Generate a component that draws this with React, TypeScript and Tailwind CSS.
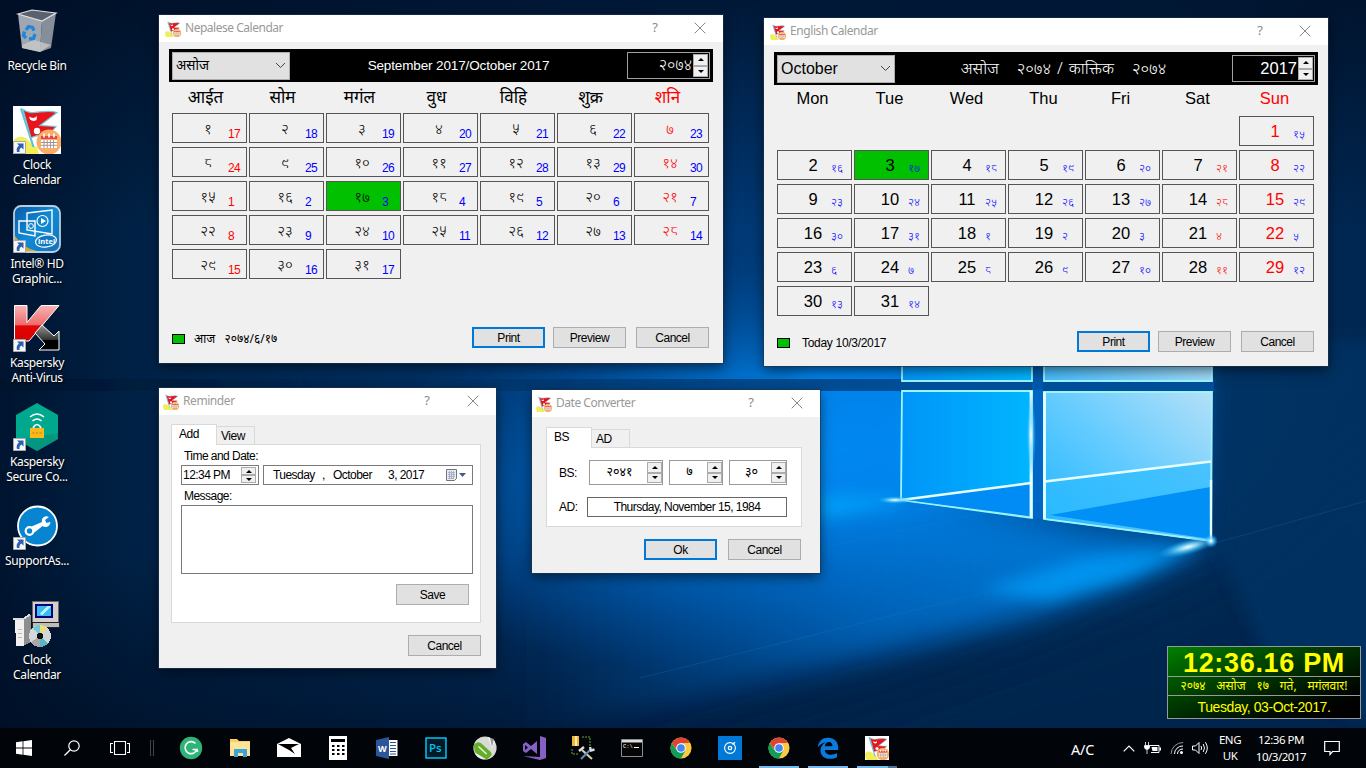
import type { ReactNode } from 'react';

const NP = ['०', '१', '२', '३', '४', '५', '६', '७', '८', '९'];
const np = (n: number) => String(n).split('').map((d) => NP[Number(d)]).join('');

/* ---------- icons ---------- */

function FlagIcon({ size }: { size: number }) {
  return (
    <svg width={size} height={size} viewBox="0 0 48 48" className="block shrink-0">
      <path d="M0 35c4-6 12-5 15-1 4 5 6 6 9 7l2 7H3c-2-5-3-9-3-13z" fill="#f2ee5a" />
      <path d="M8 2.500L20.500 41" stroke="#5fc0d8" strokeWidth="2.200" />
      <path d="M10 3.500C20 11 30 2 44 6.500L27 19.500 43 20.500C37 30 24 28 18 32z" fill="#e8141c" stroke="#6cc6da" strokeWidth="1.200" />
      <path d="M16 10.500q4.500 3 8-.5l-.5 4q-3.500 2-6.500-.5z" fill="#fff" />
      <circle cx="24" cy="25" r="3.200" fill="#fff" />
      <circle cx="36" cy="36" r="12.500" fill="#f9ad67" />
      <path d="M28 30h16v3H28z" fill="#e2454d" />
      <path d="M31 27.500v4M36 27.500v4M41 27.500v4" stroke="#fff" strokeWidth="1.600" />
      <path d="M28 34h16v8H28z" fill="#fff" />
      <path d="M28 36.500h16M28 39.300h16M31 34v8M34.200 34v8M37.400 34v8M40.600 34v8" stroke="#9b8a86" strokeWidth=".9" />
    </svg>
  );
}

function Shortcut() {
  return (
    <svg width="13" height="13" viewBox="0 0 13 13" className="absolute bottom-0 left-0">
      <path d="M.5.5h12v12H.5z" fill="#f7f7f7" stroke="#a8a8a8" />
      <path d="M4 2.500h6.500v6L8.300 6.600C6.500 8 6.200 9.400 6.600 11L4 11C3 8.500 4 6 6 4.600z" fill="#2c5fae" />
    </svg>
  );
}

function RecycleIcon() {
  return (
    <svg width="48" height="48" viewBox="0 0 48 48">
      <path d="M29 14l14-8-5 35-11 4z" fill="#868e99" />
      <path d="M5 7l24 7-2 31-18-4z" fill="#a0a7b0" />
      <path d="M9 38l12-5 17 5-11 7-18-4z" fill="#c9c9c9" opacity=".8" />
      <path d="M5 7l14-4 24 3-14 8z" fill="#59616c" stroke="#dfe3e7" strokeWidth="1.200" />
      <path d="M13 23l2.500-3.500 4 1 1.500 3M22 27l-1.500 4.500-4.500.5M13 31l-2.500-2.500 1-4" fill="none" stroke="#1f86dc" strokeWidth="3.300" />
    </svg>
  );
}

function IntelIcon() {
  return (
    <svg width="48" height="48" viewBox="0 0 48 48">
      <defs>
        <linearGradient id="intel" x1="0" y1="0" x2="1" y2="1">
          <stop offset="0" stopColor="#0a5aa8" />
          <stop offset=".5" stopColor="#0f8bd6" />
          <stop offset="1" stopColor="#1470b8" />
        </linearGradient>
      </defs>
      <rect x="1" y="1" width="46" height="46" rx="7" fill="url(#intel)" stroke="#b9cddd" strokeWidth="1.800" />
      <path d="M2 31q8 12 22 15H7q-5-1-5-6z" fill="#d9a62c" />
      <path d="M14 8l25-3v24l-25-4zM6 16h16v15L6 28z" fill="none" stroke="#fff" strokeWidth="1.400" />
      <circle cx="29.500" cy="16" r="5.500" fill="none" stroke="#fff" strokeWidth="1.200" />
      <path d="M28 13l5 3-5 3z" fill="#fff" />
      <circle cx="18" cy="21" r="2.400" fill="none" stroke="#fff" />
      <ellipse cx="33" cy="36" rx="10.500" ry="6" fill="#1277c0" stroke="#fff" strokeWidth="1.200" transform="rotate(-8 33 36)" />
      <text x="25" y="38.500" fontSize="7.500" fontWeight="700" fill="#fff" fontFamily="Open Sans">intel</text>
    </svg>
  );
}

function KasperskyIcon() {
  return (
    <svg width="48" height="48" viewBox="0 0 48 48">
      <defs>
        <linearGradient id="kred" x1="0" y1="0" x2="0" y2="1">
          <stop offset="0" stopColor="#f8b5b5" />
          <stop offset=".55" stopColor="#ec6a6c" />
          <stop offset=".57" stopColor="#e20606" />
          <stop offset="1" stopColor="#d80000" />
        </linearGradient>
        <linearGradient id="kblk" x1="0" y1="0" x2="0" y2="1">
          <stop offset="0" stopColor="#999" />
          <stop offset=".58" stopColor="#333" />
          <stop offset=".62" stopColor="#000" />
        </linearGradient>
      </defs>
      <path d="M1.500 1.500h12.500v17l14-17h18L16 37H1.500z" fill="url(#kred)" stroke="#fff" />
      <path d="M22 29l7-8 12 11 5-5v19H26l6-6z" fill="url(#kblk)" stroke="#fff" />
    </svg>
  );
}

function SecureIcon() {
  return (
    <svg width="48" height="48" viewBox="0 0 48 48">
      <path d="M24 0l21 12v24L24 48 3 36V12z" fill="#00a88e" />
      <path d="M45 30L24 34 3 36l21 12 21-12z" fill="#078a74" opacity=".6" />
      <path d="M17 14q7-6 14 0M19.500 18q4.500-4 9 0M20.500 26v-2q3.500-5 7 0v2" fill="none" stroke="#fff" strokeWidth="1.600" />
      <path d="M17 25h14v10H17z" fill="#f9b81c" />
      <path d="M19.500 30h9" stroke="#d48f0a" strokeWidth="1.600" strokeDasharray="2 1.500" />
    </svg>
  );
}

function SupportIcon() {
  return (
    <svg width="48" height="48" viewBox="0 0 48 48">
      <circle cx="24.500" cy="24" r="19.500" fill="#0785d0" stroke="#fff" strokeWidth="1.800" />
      <circle cx="16.500" cy="29" r="3.800" fill="none" stroke="#fff" strokeWidth="2.200" />
      <path d="M18.500 24.500L29 20c-1-4 3-7 7-5l-4 3 1.500 3 4-1c-.5 5-5 6-8 4l-8 6.500z" fill="#fff" />
    </svg>
  );
}

function InstallerIcon() {
  return (
    <svg width="48" height="48" viewBox="0 0 48 48" shapeRendering="crispEdges">
      <path d="M19 0h26v21H19z" fill="#d4d0c8" stroke="#6a6a6a" />
      <path d="M22 3h18v14H22z" fill="#000080" />
      <path d="M24 5h14v10H24z" fill="#38bdf0" />
      <path d="M26 13l8-8h4l-9 9z" fill="#b5f4fa" />
      <path d="M16 13l-6 5v27l8-4V15z" fill="#8e8e8e" />
      <path d="M2 19h9v26H3z" fill="#f1f1f1" />
      <path d="M5 28h4M5 32h4M5 36h4" stroke="#bbb" />
      <path d="M0 17.500h11l6-4" fill="none" stroke="#ddd" strokeWidth="2" />
      <path d="M19 21.500h27v5H19z" fill="#bdbdbd" stroke="#222" />
      <circle cx="27" cy="35" r="11" fill="#d5d8d8" />
      <path d="M27 35L19 27q4-3 8-3z" fill="#72c9d8" />
      <path d="M27 35l0-11q5 0 7 3z" fill="#e8e17a" />
      <path d="M27 35l8 8q-4 3-8 3z" fill="#58b7c5" />
      <path d="M27 35l-9 6q3 5 9 5z" fill="#a8a8a8" />
      <circle cx="27" cy="35" r="3" fill="#111" />
    </svg>
  );
}

function Chrome() {
  return (
    <svg width="22" height="22" viewBox="0 0 48 48">
      <circle cx="24" cy="24" r="23" fill="#fbca3e" />
      <path d="M4.100 12.500A23 23 0 0 0 24 47l9.500-17.500L24 24l-10 5z" fill="#0f9d58" />
      <path d="M24 13.500h20.500L33.500 30 24 24z" fill="#fbca3e" />
      <path d="M4.100 12.500A23 23 0 0 1 43.900 12.500L24 13.500 15 29z" fill="#db4437" />
      <circle cx="24" cy="24" r="10.500" fill="#fff" />
      <circle cx="24" cy="24" r="8.300" fill="#4285f4" />
    </svg>
  );
}

/* ---------- window pieces ---------- */

function Win({ title, box, children, gap, tracking }: { title: string; box: string; children: ReactNode; gap: string; tracking: string }) {
  return (
    <section className={`absolute flex flex-col bg-[#f0f0f0] shadow-[0_0_0_1px_rgba(30,50,80,0.65),0_4px_12px_rgba(0,0,0,0.55)] ${box}`}>
      <header className="flex h-[27px] shrink-0 items-center bg-white">
        <FlagIcon size={16} />
        <h2 className={`flex-1 whitespace-nowrap pb-px pl-1 font-['Noto_Sans'] text-[12px] leading-none text-[#999] ${tracking}`}>{title}</h2>
        <span className={`pb-0.5 font-['Noto_Sans'] text-[13px] leading-none text-[#8a8a8a] ${gap}`}>?</span>
        <svg width="12" height="12" viewBox="0 0 12 12" className="mr-[17px] -mt-px">
          <path d="M.7.7l10.600 10.600M11.300.7L.7 11.300" stroke="#888" />
        </svg>
      </header>
      {children}
    </section>
  );
}

function Button({ children, primary }: { children: string; primary?: boolean }) {
  return (
    <button
      className={`flex h-[21px] w-[73px] shrink-0 items-center justify-center bg-[#e1e1e1] text-[12px] leading-none tracking-[-0.04em] ${
        primary ? 'border-2 border-[#0078d7]' : 'border border-[#adadad]'
      }`}
    >
      {children}
    </button>
  );
}

function Spin({ size }: { size: string }) {
  const btn = 'flex flex-1 items-center justify-center border border-[#acacac] bg-[#f0f0f0]';
  return (
    <span className={`flex shrink-0 flex-col ${size}`}>
      <span className={btn}>
        <svg width="6" height="3" viewBox="0 0 6 3"><path d="M0 3l3-3 3 3z" /></svg>
      </span>
      <span className={btn}>
        <svg width="6" height="3" viewBox="0 0 6 3"><path d="M0 0l3 3 3-3z" /></svg>
      </span>
    </span>
  );
}

type Cell = { main: string; sub: string; today: boolean; mainRed: boolean; subRed: boolean } | null;

function Calendar(props: {
  title: string; box: string; tracking: string; month: string; monthCls: string; caption: string; captionCls: string; year: string; yearCls: string;
  days: string[]; dayCls: string; cells: Cell[]; mainCls: string; subCls: string; today: string; todayCls: string; footer: string;
}) {
  return (
    <Win title={props.title} box={props.box} gap="mr-[36px]" tracking={props.tracking}>
      <div className="mx-2.5 mt-[7px] flex h-[33px] items-center justify-between bg-black px-[3px]">
        <div className="flex h-7 w-[118px] items-center justify-between border border-[#adadad] bg-[#e1e1e1] pl-[3px] pr-[3px]">
          <span className={props.monthCls}>{props.month}</span>
          <svg width="11" height="7" viewBox="0 0 11 7"><path d="M1 1l4.500 4.500L10 1" fill="none" stroke="#444" /></svg>
        </div>
        <div className={`flex-1 text-center whitespace-pre text-white ${props.captionCls}`}>{props.caption}</div>
        <div className="flex h-[27px] w-[83px] items-center border border-[#a0a0a0] pr-px">
          <span className={`flex-1 pr-px text-right text-white ${props.yearCls}`}>{props.year}</span>
          <Spin size="h-[23px] w-[15px]" />
        </div>
      </div>
      <div className="mt-px ml-[12px] grid h-[30px] grid-cols-[repeat(7,77px)] items-center text-center">
        {props.days.map((d, i) => (
          <span key={d} className={`whitespace-nowrap ${props.dayCls} ${i === 6 ? 'text-[#ff0000]' : ''}`}>{d}</span>
        ))}
      </div>
      <div className="ml-[13px] grid auto-rows-[30px] grid-cols-[repeat(7,75px)] gap-x-0.5 gap-y-1">
        {props.cells.map((c, i) =>
          c ? (
            <div key={i} className={`flex border border-[#555] pl-[15px] ${c.today ? 'bg-[#00c000]' : ''}`}>
              <span className={`w-10 text-center ${props.mainCls} ${c.mainRed ? 'text-[#ff0000]' : ''}`}>{c.main}</span>
              <span className={`w-0 whitespace-nowrap ${props.subCls} ${c.subRed ? 'text-[#ff0000]' : 'text-[#0000ff]'}`}>{c.sub}</span>
            </div>
          ) : (
            <div key={i} />
          ),
        )}
      </div>
      <div className={`mt-auto flex items-center pr-[14px] pl-[13px] ${props.footer}`}>
        <span className="mt-[3px] h-2.5 w-[13px] border border-black bg-[#00c000]" />
        <span className={`mt-[3px] flex-1 whitespace-pre leading-none ${props.todayCls}`}>{props.today}</span>
        <Button primary>Print</Button>
        <span className="w-2" />
        <Button>Preview</Button>
        <span className="w-2.5" />
        <Button>Cancel</Button>
      </div>
    </Win>
  );
}

const nepalCells: Cell[] = Array.from({ length: 31 }, (_, i) => {
  const ad = i + 17 > 30 ? i - 13 : i + 17;
  return { main: np(i + 1), sub: String(ad), today: i === 16, mainRed: i % 7 === 6, subRed: i % 7 === 0 };
});

const englishCells: Cell[] = Array.from({ length: 37 }, (_, i) => {
  const d = i - 5;
  if (d < 1) return null;
  const bs = d + 14 > 31 ? d - 17 : d + 14;
  return { main: String(d), sub: np(bs), today: d === 3, mainRed: i % 7 === 6, subRed: i % 7 === 5 };
});

function Tabs({ a, b, wa, wb }: { a: string; b: string; wa: string; wb: string }) {
  return (
    <div className="flex h-5 items-end text-[12px] leading-none tracking-[-0.04em]">
      <span className={`relative -mb-px h-[21px] border border-b-0 border-[#d9d9d9] bg-white pt-[3px] pl-[7px] ${wa}`}>{a}</span>
      <span className={`h-[18px] border border-b-0 border-l-0 border-[#d9d9d9] bg-[#f0f0f0] pt-[3px] pl-[4px] ${wb}`}>{b}</span>
    </div>
  );
}

function Reminder() {
  return (
    <Win title="Reminder" box="left-[159px] top-[388px] h-[280px] w-[337px] [&>header]:pl-1" gap="mr-[37px]" tracking="tracking-[-0.035em]">
      <div className="mt-[9px] ml-3">
        <Tabs a="Add" b="View" wa="w-[46px]" wb="w-[38px]" />
        <div className="flex h-[179px] w-[310px] flex-col border border-[#d9d9d9] bg-white pl-[9px] text-[12px] leading-[12px] tracking-[-0.045em]">
          <div className="mt-[5px] pl-[3px]">Time and Date:</div>
          <div className="mt-[3px] flex gap-1">
            <div className="flex h-5 w-[78px] items-center justify-between border border-[#7a7a7a] pr-0.5 pl-[1px]">
              <span className="whitespace-nowrap">12:34 PM</span>
              <Spin size="h-4 w-[15px]" />
            </div>
            <div className="flex h-5 w-[210px] items-center border border-[#7a7a7a] pl-[9px]">
              <span className="w-[49px]">Tuesday</span>
              <span className="w-[11px]">,</span>
              <span className="w-[55px]">October</span>
              <span className="flex-1">3, 2017</span>
              <svg width="20" height="12" viewBox="0 0 20 12" className="mr-[6px]">
                <path d="M.5.500h10v9l-2 2h-8z" fill="#e8ebf2" stroke="#6d7486" />
                <path d="M2 3.500h7M2 5.500h7M2 7.500h7M2 9.500h6M3.500 2v8M5.500 2v8M7.500 2v8" stroke="#98a2b8" strokeWidth=".7" />
                <path d="M13 4h7l-3.500 4z" fill="#455a8c" />
              </svg>
            </div>
          </div>
          <div className="mt-[5px] pl-[3px]">Message:</div>
          <div className="mt-[3px] h-[69px] w-[292px] border border-[#7a7a7a]" />
          <div className="mt-[10px] flex pl-[215px]"><Button>Save</Button></div>
        </div>
        <div className="mt-[12px] flex pl-[237px]"><Button>Cancel</Button></div>
      </div>
    </Win>
  );
}

function NumBox({ value, w, vw }: { value: string; w: string; vw: string }) {
  return (
    <div className={`flex h-[25px] items-center border border-[#999] ${w}`}>
      <span lang="ne" className={`pr-1 pl-1.5 text-center font-['Noto_Sans'] text-[12.500px] leading-none tracking-normal ${vw}`}>{value}</span>
      <Spin size="h-[21px] w-[15px]" />
    </div>
  );
}

function Converter() {
  return (
    <Win title="Date Converter" box="left-[532px] top-[390px] h-[183px] w-[288px] [&>header]:pl-1" gap="mr-[37px]" tracking="tracking-[-0.04em]">
      <div className="mt-[10px] ml-[14px]">
        <Tabs a="BS" b="AD" wa="w-[46px]" wb="w-[38px]" />
        <div className="flex h-[80px] w-[256px] flex-col border border-[#d9d9d9] bg-white pl-[12px] text-[12px] leading-none tracking-[-0.04em]">
          <div className="mt-[12px] flex items-center">
            <span className="w-[30px]">BS:</span>
            <NumBox value="२०४१" w="w-[74px]" vw="w-[57px]" />
            <span className="w-1.5" />
            <NumBox value="७" w="w-[54px]" vw="w-[37px]" />
            <span className="w-1.5" />
            <NumBox value="३०" w="w-[58px]" vw="w-[41px]" />
          </div>
          <div className="mt-[12px] flex items-center">
            <span className="w-[28px]">AD:</span>
            <div className="flex h-5 w-[200px] items-center justify-center border border-[#666] tracking-[-0.045em]">Thursday, November 15, 1984</div>
          </div>
        </div>
        <div className="mt-[12px] flex gap-[11px] pl-[98px]">
          <Button primary>Ok</Button>
          <Button>Cancel</Button>
        </div>
      </div>
    </Win>
  );
}

/* ---------- desktop ---------- */

function Wallpaper() {
  return (
    <svg width="1366" height="768" viewBox="0 0 1366 768" className="absolute inset-0">
      <defs>
        <linearGradient id="sky" x1="0" y1="0" x2="1" y2="0">
          <stop offset="0" stopColor="#001430" />
          <stop offset=".12" stopColor="#00244a" />
          <stop offset=".5" stopColor="#003a78" />
          <stop offset=".85" stopColor="#003568" />
          <stop offset="1" stopColor="#002650" />
        </linearGradient>
        <linearGradient id="fade" x1="0" y1="0" x2="0" y2="1">
          <stop offset="0" stopColor="#000d22" stopOpacity=".75" />
          <stop offset=".3" stopColor="#000d22" stopOpacity="0" />
          <stop offset=".72" stopColor="#000d22" stopOpacity="0" />
          <stop offset="1" stopColor="#000d22" stopOpacity=".8" />
        </linearGradient>
        <radialGradient id="halo">
          <stop offset="0" stopColor="#0098fa" />
          <stop offset=".35" stopColor="#0084ea" stopOpacity=".9" />
          <stop offset=".7" stopColor="#0060b8" stopOpacity=".45" />
          <stop offset="1" stopColor="#004a98" stopOpacity="0" />
        </radialGradient>
        <radialGradient id="spark">
          <stop offset="0" stopColor="#fff" />
          <stop offset=".3" stopColor="#8fe4ff" stopOpacity=".85" />
          <stop offset="1" stopColor="#00a2ff" stopOpacity="0" />
        </radialGradient>
        <linearGradient id="floor" gradientUnits="userSpaceOnUse" x1="520" y1="0" x2="1200" y2="0">
          <stop offset="0" stopColor="#0060b8" stopOpacity="0" />
          <stop offset=".5" stopColor="#0078dc" stopOpacity=".6" />
          <stop offset="1" stopColor="#0090f4" stopOpacity=".85" />
        </linearGradient>
        <linearGradient id="paneL" x1="0" y1="0" x2="1" y2="0">
          <stop offset="0" stopColor="#0095f8" />
          <stop offset="1" stopColor="#00b6ff" />
        </linearGradient>
        <linearGradient id="paneR" x1="0" y1="1" x2="1" y2="0">
          <stop offset="0" stopColor="#1bb4ff" />
          <stop offset=".5" stopColor="#62cbff" />
          <stop offset="1" stopColor="#b4e0f8" />
        </linearGradient>
        <linearGradient id="paneT" x1="0" y1="0" x2="1" y2="0">
          <stop offset="0" stopColor="#48bdfc" />
          <stop offset="1" stopColor="#a0dbfa" />
        </linearGradient>
        <linearGradient id="mull" x1="0" y1="0" x2="1" y2="0">
          <stop offset="0" stopColor="#001026" stopOpacity=".6" />
          <stop offset=".6" stopColor="#00376e" stopOpacity=".8" />
          <stop offset="1" stopColor="#004f98" />
        </linearGradient>
        <filter id="b30" x="-50%" y="-50%" width="200%" height="200%"><feGaussianBlur stdDeviation="28" /></filter>
        <filter id="b14" x="-50%" y="-50%" width="200%" height="200%"><feGaussianBlur stdDeviation="15" /></filter>
        <filter id="b8" x="-50%" y="-50%" width="200%" height="200%"><feGaussianBlur stdDeviation="8" /></filter>
        <filter id="b1"><feGaussianBlur stdDeviation=".6" /></filter>
      </defs>
      <path d="M0 0h1366v768H0z" fill="url(#sky)" />
      <path d="M0 0h1366v768H0z" fill="url(#fade)" />
      <ellipse cx="840" cy="450" rx="500" ry="215" fill="url(#halo)" transform="rotate(-7 840 450)" />
      <path d="M1230 560L1040 640 900 690 560 790h840V430z" fill="#00264f" opacity=".9" filter="url(#b30)" />
      <path d="M1217 340h190v400l-130-60-62-135z" fill="#003062" opacity=".9" filter="url(#b8)" />
      <path d="M1205 543L1120 585 1030 616 900 650 520 740V560L901 503 1090 535z" fill="url(#floor)" filter="url(#b14)" />
      <path d="M1208 543L1130 578 1050 600 980 590 1080 560z" fill="#00a2ff" opacity=".7" filter="url(#b8)" />
      <path d="M800 366h102v130h-102z" fill="#0084ee" opacity=".8" filter="url(#b8)" />
      <path d="M820 497l81 1v6l-81 14z" fill="#00a8ff" opacity=".8" filter="url(#b8)" />
      <path d="M0 379h902v12H0z" fill="url(#mull)" filter="url(#b1)" />
      <path d="M900 379h314v13H900z" fill="#004f98" />
      <path d="M1032 360h11v32h-11z" fill="#0058a8" />
      <path d="M1032 390h11v129h-11z" fill="#0068c4" />
      <path d="M820 548l240-52M640 678l420-104M1215 543l151-42" stroke="#1a86dc" strokeOpacity=".22" />
      <g stroke="#9cf4ff" strokeWidth="1.800" filter="url(#b1)">
        <path d="M902 350h130v31H902z" fill="url(#paneL)" />
        <path d="M1044 350h168v31h-168z" fill="url(#paneT)" />
        <path d="M902 391h130v127l-131-18z" fill="url(#paneL)" />
        <path d="M1044 392h168l-1 149-167-22z" fill="url(#paneR)" />
      </g>
      <path d="M903 500l127-16v33z" fill="#008cf4" />
      <path d="M1046 482l164-20v25l-164 29z" fill="#2ebaff" opacity=".7" />
      <path d="M1050 515l160-28v52z" fill="#0090f6" />
      <g fill="none" stroke="#e6feff" filter="url(#b1)">
        <path d="M901 500l130-17M1045 481.500l166-20" strokeWidth="2.400" />
        <path d="M1031 391v127M1044.500 392v127" strokeWidth="2.800" />
        <path d="M901 500l130 17M1044 519l167 22" strokeWidth="1.200" stroke="#9af3ff" />
        <path d="M1211 480v61" strokeWidth="2.400" />
      </g>
      <ellipse cx="1031" cy="435" rx="5" ry="42" fill="url(#spark)" />
      <ellipse cx="895" cy="500" rx="18" ry="4" fill="url(#spark)" />
      <ellipse cx="1188" cy="547" rx="32" ry="8" fill="url(#spark)" transform="rotate(-15 1188 547)" />
      <circle cx="1211" cy="541" r="7" fill="url(#spark)" />
    </svg>
  );
}

const shortcuts: { icon: ReactNode; lines: string[]; link: boolean }[] = [
  { icon: <RecycleIcon />, lines: ['Recycle Bin'], link: false },
  { icon: <span className="block bg-white"><FlagIcon size={48} /></span>, lines: ['Clock', 'Calendar'], link: true },
  { icon: <IntelIcon />, lines: ['Intel® HD', 'Graphic...'], link: true },
  { icon: <KasperskyIcon />, lines: ['Kaspersky', 'Anti-Virus'], link: true },
  { icon: <SecureIcon />, lines: ['Kaspersky', 'Secure Co...'], link: true },
  { icon: <SupportIcon />, lines: ['SupportAs...'], link: true },
  { icon: <InstallerIcon />, lines: ['Clock', 'Calendar'], link: false },
];

function TaskIcons() {
  const icons: ReactNode[] = [
    <svg width="24" height="24" viewBox="0 0 24 24"><circle cx="12" cy="12" r="11.200" fill="#2fb378" /><path d="M16.500 7.500a6 6 0 1 0 1.300 6H13.500M18 13.500l.6 2.500" fill="none" stroke="#f2fff8" strokeWidth="1.700" /></svg>,
    <svg width="22" height="20" viewBox="0 0 22 20"><path d="M1 1h7l2 2h11v15H1z" fill="#f7cf62" /><path d="M1 4h20v14H1z" fill="#ffe497" /><path d="M5 19V11h13v8h-4v-4H9v4z" fill="#3aa5dc" /></svg>,
    <svg width="24" height="20" viewBox="0 0 24 20"><path d="M0 6l12-6 12 6v13H0z" fill="#fff" /><path d="M1 6h21l-8 4 4 6-6-4z" fill="#000" /></svg>,
    <svg width="18" height="24" viewBox="0 0 18 24"><path d="M0 0h18v24H0z" fill="#fff" /><path d="M2 3h14v3H2z" /><path d="M3 10h13M3 14h13M3 18h13" stroke="#000" strokeWidth="2" strokeDasharray="2.500 2.500" /></svg>,
    <svg width="22" height="22" viewBox="0 0 22 22"><path d="M13 3h8.500v16H13z" fill="#fff" /><path d="M14 5.500h6M14 8.500h6M14 11.500h6M14 14.500h6M14 17h6" stroke="#2b579a" /><path d="M0 3l13-3v22L0 19z" fill="#2b579a" /><text x="2" y="14.500" fontSize="9" fontWeight="700" fill="#fff" fontFamily="Open Sans">W</text></svg>,
    <svg width="22" height="22" viewBox="0 0 22 22"><path d="M1 1h20v20H1z" fill="#001a26" stroke="#00c3f5" strokeWidth="1.500" /><text x="4" y="15" fontSize="11.500" fontWeight="600" fill="#00c3f5" fontFamily="Open Sans">Ps</text></svg>,
    <svg width="24" height="24" viewBox="0 0 24 24"><circle cx="12" cy="12" r="11.600" fill="#d9d9d7" /><path d="M15 1l4 12 3-8z" fill="#f5f5f5" /><path d="M17 2l2 9 2-8z" fill="#999" /><path d="M.8 9q3-4 7-2l10 9q2 3-1 5L14 23.400L2 17z" fill="#67ad2c" /><path d="M1.500 16l11 7.500q-8-.5-11-7.500z" fill="#f2f2f2" /><path d="M5.500 10.500l8 7.500" stroke="#f3f9e8" strokeWidth="1.300" /></svg>,
    <svg width="24" height="24" viewBox="0 0 24 24"><path d="M1 8l3-2 5 4 6-5v13l-6-5-5 4-3-2zM3 9v5l3-2.500z" fill="#8661c5" fillRule="evenodd" /><path d="M18 0l6 2v20l-6 2-17-4 17 1z" fill="#8661c5" /></svg>,
    <svg width="24" height="24" viewBox="0 0 24 24"><path d="M1 0h7v10H1z" fill="#f3b43a" /><path d="M4 0h2v10H4z" fill="#fff0b0" /><path d="M11 1h8v9M1 13v5h7" fill="none" stroke="#64a83c" strokeDasharray="2 1" /><path d="M11 14l10 9" stroke="#d9c9a4" strokeWidth="2.200" /><path d="M20 13L10 23" stroke="#5c8cb8" strokeWidth="2.200" /><path d="M8 15l5-4M19 11l1 3.500 3.500-1" fill="none" stroke="#ddd" strokeWidth="2.400" /></svg>,
    <svg width="22" height="18" viewBox="0 0 22 18"><path d="M.5.5h21v17H.5z" fill="#050505" stroke="#8c8c8c" /><path d="M1 1h20v2.500H1z" fill="#ddd" /><path d="M13 8.500h5" stroke="#fff" /><text x="2" y="9" fontSize="5.500" fill="#fff" fontFamily="Liberation Mono">C:\</text></svg>,
    <Chrome />,
    <svg width="24" height="24" viewBox="0 0 24 24"><path d="M0 0h24v24H0z" fill="#0078d7" /><circle cx="12" cy="12" r="5.400" fill="none" stroke="#fff" strokeWidth="1.100" /><circle cx="12" cy="12" r="1.700" fill="none" stroke="#fff" strokeWidth="1.300" /><path d="M14.500 8.500L17 6.200" stroke="#fff" strokeWidth="1.300" /></svg>,
    <Chrome />,
    <svg width="22" height="22" viewBox="0 0 22 22"><path d="M.8 10.200C1.500 4 5.500.7 11 .7c6.500 0 10.200 4.300 10.200 9.800v2.500H7.800c.2 3 2.700 4.800 6 4.800 2.300 0 4.500-.6 6.200-1.700v4.200c-2 1.100-4.400 1.500-7 1.500-6 0-9.500-3.500-9.500-8.300 0-3.500 1.800-6.500 5.300-8.300C6.600 5.600 3 7 .8 10.200zM7.900 9.200h7.600c0-2.700-1.300-4.300-3.700-4.300-2.200 0-3.700 1.800-3.900 4.300z" fill="#0a7bdc" /></svg>,
    <span className="bg-white"><FlagIcon size={24} /></span>,
  ];
  return (
    <>
      {icons.map((ic, i) => (
        <span key={i} className="flex h-10 w-[49px] flex-col items-center justify-center">
          <span className={`flex flex-1 items-center ${i > 11 ? 'mt-0.5' : ''}`}>{ic}</span>
          {i > 11 && <span className="flex h-0.5 w-10 bg-[#76b9ed]">{i === 14 && <span className="ml-auto w-[9px] bg-[#4a7497]" />}</span>}
        </span>
      ))}
    </>
  );
}

function Taskbar() {
  const line = { fill: 'none', stroke: '#fff' } as const;
  return (
    <footer className="relative mt-auto flex h-10 items-center bg-[#010408] font-['Noto_Sans'] text-[11.500px] leading-none text-white">
      <span className="flex w-12 justify-center">
        <svg width="16" height="16" viewBox="0 0 16 16"><path d="M0 2.200L6.600 1.300v6.200H0zM7.400 1.200L16 0v7.500H7.400zM0 8.400h6.600v6.300L0 13.700zM7.400 8.400H16V16l-8.600-1.200z" fill="#fff" /></svg>
      </span>
      <span className="flex w-12 justify-center">
        <svg width="16" height="16" viewBox="0 0 16 16"><circle cx="10" cy="6" r="5.200" {...line} strokeWidth="1.200" /><path d="M6.300 9.700L.5 15.500" {...line} strokeWidth="1.300" /></svg>
      </span>
      <span className="flex w-12 justify-center">
        <svg width="20" height="14" viewBox="0 0 20 14"><path d="M4.500.5h11v13h-11zM3 2.500H.5v9H3M17 2.500h2.500v9H17" {...line} strokeWidth="1.100" /></svg>
      </span>
      <span className="flex w-[22px] justify-center gap-[2px] pr-[6px]">
        <span className="h-4 w-px bg-[#444]" />
        <span className="h-4 w-px bg-[#444]" />
      </span>
      <TaskIcons />
      <div className="flex flex-1 items-center pl-[170px]">
        <span className="w-[52px] pt-0.5 text-[14.500px] tracking-[-0.01em]">A/C</span>
        <svg width="12" height="7" viewBox="0 0 12 7"><path d="M.7 6.300L6 1l5.300 5.300" {...line} strokeWidth="1.200" /></svg>
        <svg width="17" height="13" viewBox="0 0 17 13" className="ml-[9px]"><path d="M5.500 3.500h9.500v7H7" {...line} /><path d="M7.500 5h6v4h-5zM15.500 5.500H17v3h-1.500z" fill="#fff" /><path d="M1.500 0v3M4.500 0v3M.5 3.500h5V5.500Q5 7.500 3 7.500 1 7.500.5 5.500zM3 8v4" fill="#fff" stroke="#fff" strokeWidth=".8" /></svg>
        <svg width="15" height="14" viewBox="0 0 15 14" className="ml-[9px]"><path d="M1 13A12 12 0 0 1 13 1.500" {...line} stroke="#999" /><path d="M4.500 13A8 8 0 0 1 13 5M7.500 13A5 5 0 0 1 13 8" {...line} /><circle cx="11.500" cy="11.500" r="1.500" fill="#fff" /></svg>
        <svg width="17" height="14" viewBox="0 0 17 14" className="ml-[7px]"><path d="M.5 5h3L7 1.500v11L3.500 9h-3zM9 5q1.300 2 0 4M11.200 3q2.600 4 0 8M13.400 1.200q3.800 5.800 0 11.600" {...line} /></svg>
        <span className="ml-[3px] w-[36px] text-center leading-[16.500px] tracking-[-0.04em]">ENG<br />UK</span>
        <span className="ml-[2px] w-[62px] text-center leading-[17px] tracking-[-0.04em] whitespace-nowrap">12:36 PM<br />10/3/2017</span>
        <svg width="16" height="16" viewBox="0 0 16 16" className="ml-[12px]"><path d="M.7 1.500h14.600v10H8.500L6 14.500v-3H.7z" {...line} strokeWidth="1.200" /></svg>
      </div>
    </footer>
  );
}

export default function App() {
  return (
    <main className="relative flex h-[768px] w-[1366px] flex-col overflow-hidden bg-[#001a3a] font-['Liberation_Sans','Noto_Sans',sans-serif] text-black">
      <Wallpaper />
      <div className="relative flex w-[74px] flex-col pt-[7px]">
        {shortcuts.map((s, i) => (
          <div key={i} className="flex h-[99px] flex-col items-center">
            <div className="relative h-12 w-12">
              {s.icon}
              {s.link && <Shortcut />}
            </div>
            <div className="mt-[3px] text-center font-['Noto_Sans'] text-[12px] leading-[15px] tracking-[-0.03em] whitespace-nowrap text-white [text-shadow:1px_1px_2px_#000]">
              {s.lines.map((l) => <div key={l}>{l}</div>)}
            </div>
          </div>
        ))}
      </div>

      <div lang="ne">
        <Calendar
          title="Nepalese Calendar" tracking="tracking-[-0.04em]" box="left-[159px] top-[15px] h-[348px] w-[564px] [&>header]:pl-1.5"
          month="असोज" monthCls="font-['Noto_Sans'] text-[13.500px] leading-none" caption="September 2017/October 2017" captionCls="text-[13.500px] tracking-[-0.01em] pt-px"
          year="२०७४" yearCls="font-['Noto_Sans'] font-light text-[16px] leading-none mb-1"
          days={['आईत', 'सोम', 'मगंल', 'वुध', 'विहि', 'शुक्र', 'शनि']} dayCls="font-['Noto_Sans'] text-[17px] leading-none pr-2 pb-[4px]"
          cells={nepalCells} mainCls="font-['Noto_Sans'] font-light text-[15px] leading-[28px]" subCls="text-[12px] leading-[40px] tracking-[-0.06em]"
          today="आज   २०७४/६/१७" todayCls="pl-[9px] font-['Noto_Sans'] text-[12px]" footer="mb-[15px]"
        />
        <Calendar
          title="English Calendar" tracking="tracking-[-0.035em]" box="left-[764px] top-[18px] h-[348px] w-[564px] [&>header]:pl-1.5"
          month="October" monthCls="text-[16px] leading-none" caption="असोज   २०७४ / काक्तिक   २०७४" captionCls="font-['Noto_Sans'] font-light text-[16.500px] [word-spacing:1.700px]"
          year="2017" yearCls="text-[16.500px] leading-none"
          days={['Mon', 'Tue', 'Wed', 'Thu', 'Fri', 'Sat', 'Sun']} dayCls="text-[16.500px] leading-none pr-1 pb-[6px]"
          cells={englishCells} mainCls="text-[16.500px] leading-[29px]" subCls="font-['Noto_Sans'] font-light text-[11.500px] leading-[34px] -ml-[2px]"
          today="Today 10/3/2017" todayCls="pl-[12px] text-[12px] tracking-[-0.025em]" footer="mb-[14px]"
        />
      </div>
      <Reminder />
      <Converter />

      <aside className="absolute left-[1167px] top-[646px] flex h-[73px] w-[194px] flex-col divide-y divide-[#999] border border-[#999] bg-linear-to-br from-[#008000] to-black text-center text-[#ffff00]">
        <div className="h-[30px] pt-0.5 text-[27px] leading-[28px] font-bold tracking-[0.025em] whitespace-nowrap">12:36.16 PM</div>
        <div lang="ne" className="h-[19px] font-['Noto_Sans'] text-[12px] leading-[18px] whitespace-pre [word-spacing:0.500px]">२०७४   असोज   १७   गते,   मगंलवार!</div>
        <div className="flex-1 text-[14px] leading-[23px] tracking-[-0.03em]">Tuesday, 03-Oct-2017.</div>
      </aside>

      <Taskbar />
    </main>
  );
}
